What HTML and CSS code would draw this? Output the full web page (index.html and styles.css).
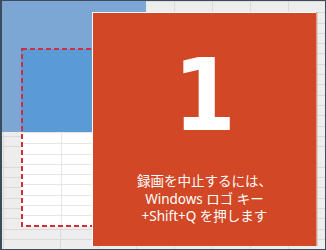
FILE: index.html
```html
<!DOCTYPE html>
<html lang="ja">
<head>
    <meta charset="UTF-8">
    <title>画面録画</title>
    <link rel="stylesheet" href="styles.css">
</head>
<body>
    <div class="frame">
        <div class="sheet">
            <div class="cell light-side"></div>
            <div class="cell light-top"></div>
            <div class="cell dark"></div>
            <div class="cell white"></div>
        </div>

        <svg class="selection" width="76" height="180" viewBox="0 0 76 180">
            <rect x="1" y="1" width="80" height="177" fill="none" stroke="#cf2f3d" stroke-width="2" stroke-dasharray="5 3"/>
        </svg>

        <div class="panel">
            <div class="count">1</div>
            <p class="hint">録画を中止するには、<br>Windows ロゴ キー<br>+Shift+Q を押します</p>
        </div>
    </div>
</body>
</html>
```

FILE: styles.css
```css
:root {
    --frame: #3c4c5c;
    --light-blue: #7ca6d3;
    --dark-blue: #5b9bd5;
    --panel-red: #d24726;
    --cell-gray: #ededed;
    --grid-line: #dadada;
}

body {
    margin: 0;
    background: #fff;
}

.frame {
    position: relative;
    width: 326px;
    height: 250px;
    box-sizing: border-box;
    border: 1px solid var(--frame);
    border-left-width: 2px;
    overflow: hidden;
}

.sheet {
    display: grid;
    grid-template-columns: 19px 125px 1fr;
    grid-template-rows: 48px 83px 94px 1fr;
    height: 100%;
    background-color: var(--cell-gray);
    background-image:
        repeating-linear-gradient(to bottom, transparent 0 9.3px, var(--grid-line) 9.3px 10.3px),
        repeating-linear-gradient(to right, transparent 0 37px, var(--grid-line) 37px 38px);
    background-position: 0 2px, 21px 0;
}

.light-side {
    grid-column: 1;
    grid-row: 1 / 3;
    background: var(--light-blue);
}

.light-top {
    grid-column: 2;
    grid-row: 1;
    background: var(--light-blue);
}

.dark {
    grid-column: 2;
    grid-row: 2;
    background: var(--dark-blue);
}

.white {
    grid-column: 2;
    grid-row: 3;
    background-color: #fff;
    background-image:
        repeating-linear-gradient(to bottom, transparent 0 9.3px, #e6e6e6 9.3px 10.3px),
        linear-gradient(to right, transparent 40px, #e6e6e6 40px 41px, transparent 41px);
    background-position: 0 2px, 0 0;
}

.selection {
    position: absolute;
    left: 19px;
    top: 47px;
}

.panel {
    position: absolute;
    left: 90px;
    top: 11px;
    width: 224px;
    height: 234px;
    box-sizing: border-box;
    border-top: 1px solid #fff;
    border-left: 1px solid #fff;
    background: var(--panel-red);
    box-shadow: 1px 0 0 #e79a88, 2px 0 0 rgba(180, 180, 180, 0.5);
    display: flex;
    flex-direction: column;
    align-items: center;
    color: #fff;
}

.count {
    margin-top: 33px;
    font-family: "DejaVu Sans Condensed", "DejaVu Sans", sans-serif;
    font-stretch: condensed;
    font-weight: 700;
    font-size: 100px;
    line-height: 100px;
}

.hint {
    margin: 27px 0 0;
    font-family: "Noto Sans", "Noto Sans CJK JP", sans-serif;
    font-size: 13.5px;
    line-height: 17.5px;
    text-align: center;
}
```
